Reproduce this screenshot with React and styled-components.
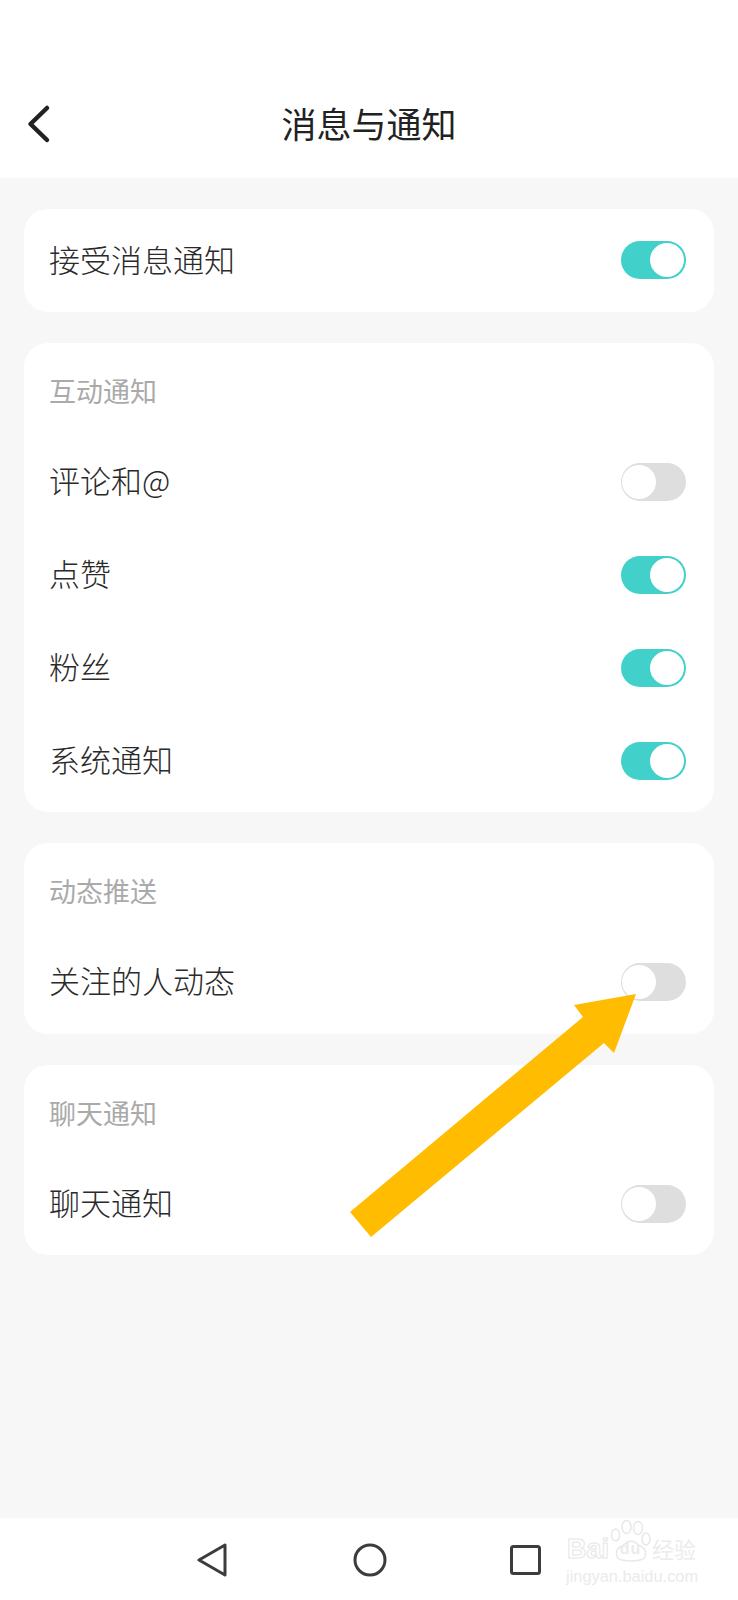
// App.jsx
import React from 'react'
import styled, { createGlobalStyle } from 'styled-components'

const GlobalStyle = createGlobalStyle`
  html, body {
    margin: 0;
    padding: 0;
    background: #f7f7f7;
  }
  * {
    box-sizing: border-box;
  }
`

const Page = styled.div`
  position: relative;
  width: 738px;
  height: 1600px;
  display: flex;
  flex-direction: column;
  overflow: hidden;
  background: #f7f7f7;
  font-family: "Noto Sans CJK SC", "Noto Sans", sans-serif;
`

const Header = styled.header`
  height: 178px;
  padding: 70px 0 0 24px;
  display: grid;
  grid-template-columns: 32px 1fr 56px;
  align-items: center;
  background: #fff;
`

const BackIcon = styled.svg`
  width: 28px;
  height: 44px;
`

const Title = styled.h1`
  margin: 0;
  padding-bottom: 3px;
  text-align: center;
  font-size: 35px;
  font-weight: 400;
  color: #222;
`

const Content = styled.main`
  flex: 1;
  padding: 31px 24px 0;
  display: flex;
  flex-direction: column;
  gap: 31px;
`

const Card = styled.section`
  background: #fff;
  border-radius: 24px;
  padding: 0 28px ${(p) => p.$pad}px 25px;
`

const Heading = styled.div`
  height: 93px;
  padding-top: 2px;
  display: flex;
  align-items: center;
  font-size: 27px;
  color: #aaa;
`

const Row = styled.div`
  height: ${(p) => (p.$single ? '103px' : '93px')};
  display: flex;
  align-items: center;
  justify-content: space-between;
  font-size: 31px;
  font-weight: 300;
  color: #2a2a2a;
`

const Label = styled.span`
  padding-bottom: ${(p) => (p.$single ? '4px' : '6px')};
`

const Track = styled.span`
  position: relative;
  width: 65px;
  height: 38px;
  margin-bottom: 2px;
  border-radius: 19px;
  background: ${(p) => (p.$on ? '#42d0cb' : '#dedede')};
`

const Knob = styled.span`
  position: absolute;
  top: 2px;
  left: ${(p) => (p.$on ? '29px' : '1px')};
  width: 34px;
  height: 34px;
  border-radius: 50%;
  background: #fff;
`

const NavBar = styled.nav`
  height: 82px;
  padding: 25px 0 0 196px;
  display: flex;
  align-items: flex-start;
  gap: 122.5px;
  background: #fff;
`

const NavIcon = styled.svg`
  width: 34px;
  height: 34px;
  fill: none;
  stroke: #3c3c3c;
  stroke-width: 3;
  stroke-linejoin: round;
`

const Arrow = styled.svg`
  position: absolute;
  left: 0;
  top: 0;
  pointer-events: none;
`

const Watermark = styled.div`
  position: absolute;
  left: 566px;
  top: 1520px;
  width: 134px;
  height: 66px;
  color: #ebebeb;
  font-family: "Liberation Sans", Arial, sans-serif;
`

const Paw = styled.svg`
  position: absolute;
  left: 45px;
  top: 0;
  width: 40px;
  height: 42px;
`

const Brand = styled.div`
  position: absolute;
  left: 1px;
  top: 13px;
  display: flex;
  align-items: baseline;
  font-size: 27px;
  font-weight: 700;
  line-height: 30px;
  white-space: nowrap;
  color: transparent;
  -webkit-text-stroke: 1px #e6e6e6;
`

const BrandDu = styled.span`
  position: relative;
  bottom: 4px;
  width: 43px;
  text-align: center;
  font-size: 16px;
  letter-spacing: 1px;
  color: #ebebeb;
  -webkit-text-stroke: 0;
`

const BrandCn = styled.span`
  font-family: "Noto Sans CJK SC", sans-serif;
  font-size: 22px;
  font-weight: 400;
  color: #ececec;
  -webkit-text-stroke: 0;
`

const Domain = styled.div`
  position: absolute;
  left: 0;
  top: 47px;
  font-size: 16.4px;
  line-height: 18px;
  white-space: nowrap;
`

const Toggle = ({ on }) => (
  <Track $on={on}>
    <Knob $on={on} />
  </Track>
)

const sections = [
  { rows: [{ label: '接受消息通知', on: true }], single: true, pad: 0 },
  {
    title: '互动通知',
    pad: 4,
    rows: [
      { label: '评论和@', on: false },
      { label: '点赞', on: true },
      { label: '粉丝', on: true },
      { label: '系统通知', on: true },
    ],
  },
  { title: '动态推送', pad: 5, rows: [{ label: '关注的人动态', on: false }] },
  { title: '聊天通知', pad: 4, rows: [{ label: '聊天通知', on: false }] },
]

const App = () => (
  <Page>
    <GlobalStyle />
    <Header>
      <BackIcon viewBox="0 0 28 44">
        <path d="M23 6 L6.5 22 L23 38" fill="none" stroke="#222" strokeWidth="4.5" strokeLinecap="round" strokeLinejoin="round" />
      </BackIcon>
      <Title>消息与通知</Title>
    </Header>

    <Content>
      {sections.map((section, i) => (
        <Card key={i} $pad={section.pad}>
          {section.title && <Heading>{section.title}</Heading>}
          {section.rows.map((row) => (
            <Row key={row.label} $single={section.single}>
              <Label $single={section.single}>{row.label}</Label>
              <Toggle on={row.on} />
            </Row>
          ))}
        </Card>
      ))}
    </Content>

    <NavBar>
      <NavIcon viewBox="0 0 34 34">
        <path d="M3 17 L29 2 L29 32 Z" />
      </NavIcon>
      <NavIcon viewBox="0 0 34 34">
        <circle cx="17" cy="17" r="15" />
      </NavIcon>
      <NavIcon viewBox="0 0 34 34">
        <rect x="2.5" y="3.5" width="28" height="27" rx="2" />
      </NavIcon>
    </NavBar>

    <Arrow width="738" height="1600" viewBox="0 0 738 1600">
      <polygon points="350,1212 371,1237 604,1043 614,1053 636,994 574,1005 583,1017" fill="#ffbc00" />
    </Arrow>

    <Watermark>
      <Paw viewBox="0 0 40 42">
        <g fill="none" stroke="#e8e8e8" strokeWidth="1.5">
          <ellipse cx="4.5" cy="15" rx="4" ry="6" />
          <ellipse cx="15.5" cy="7" rx="4.5" ry="6.5" />
          <ellipse cx="27" cy="8" rx="4.5" ry="6.5" />
          <ellipse cx="35" cy="19" rx="4" ry="6" />
          <path d="M20 21 C16 21 13 25 9 27 C4 30 4 39 11 40 C16 41 24 41 29 40 C36 39 36 30 31 27 C27 25 24 21 20 21 Z" />
        </g>
      </Paw>
      <Brand>
        Bai<BrandDu>du</BrandDu><BrandCn>经验</BrandCn>
      </Brand>
      <Domain>jingyan.baidu.com</Domain>
    </Watermark>
  </Page>
)

export default App
